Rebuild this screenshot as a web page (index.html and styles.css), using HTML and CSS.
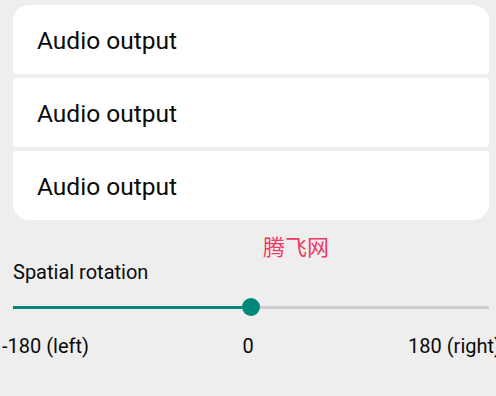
FILE: index.html
```html
<!DOCTYPE html>
<html>
<head>
<meta charset="utf-8">
<link rel="stylesheet" href="styles.css">
</head>
<body>
<div class="page">
  <div class="group">
    <div class="item first">Audio output</div>
    <div class="item">Audio output</div>
    <div class="item last">Audio output</div>
  </div>
  <div class="watermark">腾飞网</div>
  <div class="slider-block">
    <div class="slider-title">Spatial rotation</div>
    <div class="slider">
      <div class="track-active"></div>
      <div class="thumb"></div>
      <div class="track-rest"></div>
    </div>
    <div class="labels">
      <span class="lab-left">-180 (left)</span>
      <span class="lab-mid">0</span>
      <span class="lab-right">180 (right)</span>
    </div>
  </div>
</div>
</body>
</html>
```
FILE: styles.css
```css
html, body {
  margin: 0;
  padding: 0;
  background: #eeeeee;
  overflow: hidden;
}
body {
  width: 496px;
  height: 396px;
  font-family: Roboto, "Noto Sans", sans-serif;
  color: #0a0a0a;
}
.page {
  padding: 5px 7px 0 13px;
}
.group {
  display: flex;
  flex-direction: column;
  gap: 4px;
}
.item {
  height: 69px;
  background: #fff;
  border-radius: 4px;
  display: flex;
  align-items: center;
  padding-left: 24px;
  padding-top: 2px;
  box-sizing: border-box;
  font-size: 24.5px;
}
.item.first {
  border-radius: 16px 16px 4px 4px;
}
.item.last {
  border-radius: 4px 4px 16px 16px;
}
.watermark {
  margin: 12px 0 0 250px;
  height: 26px;
  font-family: "Noto Sans CJK SC", sans-serif;
  font-size: 22px;
  line-height: 26px;
  color: #ee3a62;
}
.slider-title {
  font-size: 20px;
  line-height: 24px;
  margin-top: 2px;
}
.slider {
  display: flex;
  align-items: center;
  height: 18px;
  margin-top: 14px;
}
.track-active {
  width: 229px;
  height: 3px;
  background: #00897b;
}
.thumb {
  width: 18px;
  height: 18px;
  border-radius: 50%;
  background: #00897b;
  flex: none;
}
.track-rest {
  flex: 1;
  height: 3px;
  background: #cfcfcf;
}
.labels {
  display: grid;
  grid-template-columns: 1fr auto 1fr;
  width: 499px;
  margin-left: -11px;
  margin-top: 17px;
  font-size: 20px;
  line-height: 26px;
}
.lab-left { justify-self: start; }
.lab-mid { justify-self: center; margin-right: 7px; }
.lab-right { justify-self: end; }
```
